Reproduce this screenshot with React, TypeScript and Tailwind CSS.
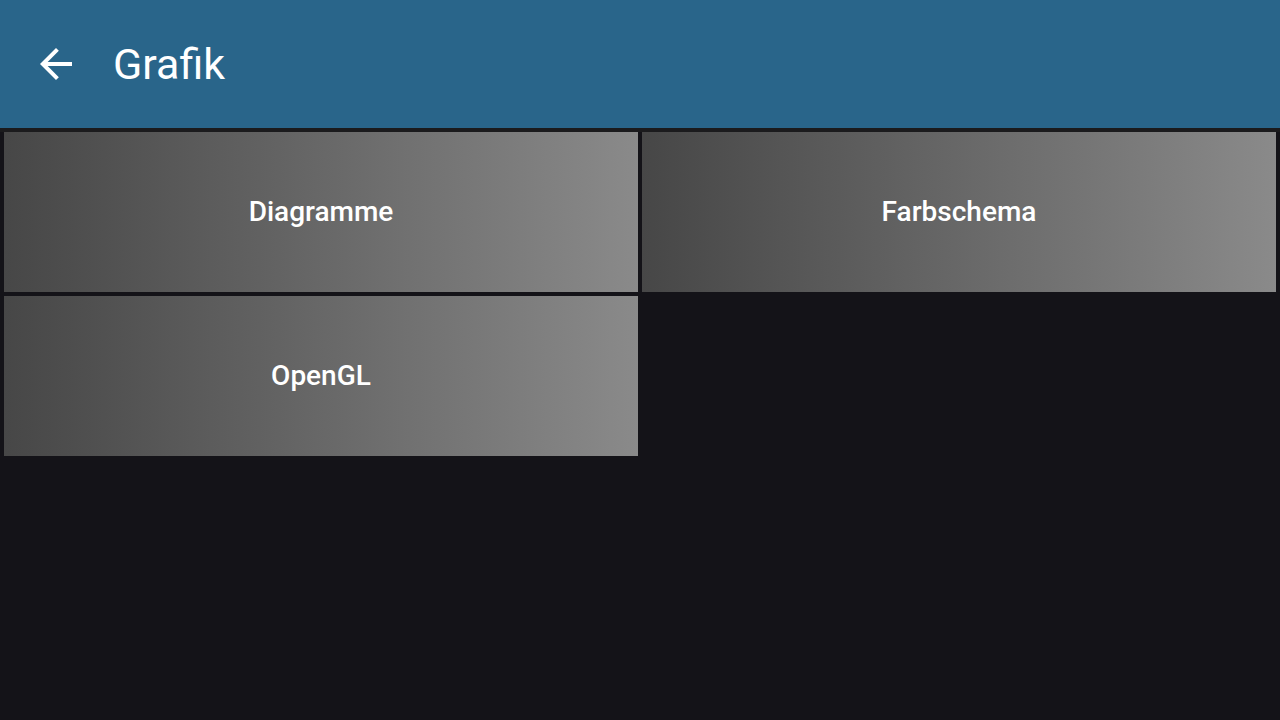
const tiles = ['Diagramme', 'Farbschema', 'OpenGL'];

export default function App() {
  return (
    <div className="w-[1280px] h-[720px] bg-[#141318] flex flex-col" style={{ fontFamily: 'Roboto, "Noto Sans", sans-serif' }}>
      <header className="h-[128px] bg-[#29658a] flex items-center shrink-0">
        <svg className="ml-[32px] w-[48px] h-[48px]" viewBox="0 0 24 24" fill="#ffffff">
          <path d="M20 11H7.83l5.59-5.59L12 4l-8 8 8 8 1.41-1.41L7.83 13H20v-2z" />
        </svg>
        <h1 className="ml-[33px] text-[43px] text-white font-normal leading-none">Grafik</h1>
      </header>
      <div className="h-[4px] bg-[#1b1b1d]" />
      <div className="grid grid-cols-2 gap-[4px] px-[4px]">
        {tiles.map(t => (
          <div
            key={t}
            className="h-[160px] flex items-center justify-center bg-gradient-to-r from-[#474747] to-[#8a8a8a]"
          >
            <span className="text-white text-[28px] font-medium">{t}</span>
          </div>
        ))}
      </div>
    </div>
  );
}
